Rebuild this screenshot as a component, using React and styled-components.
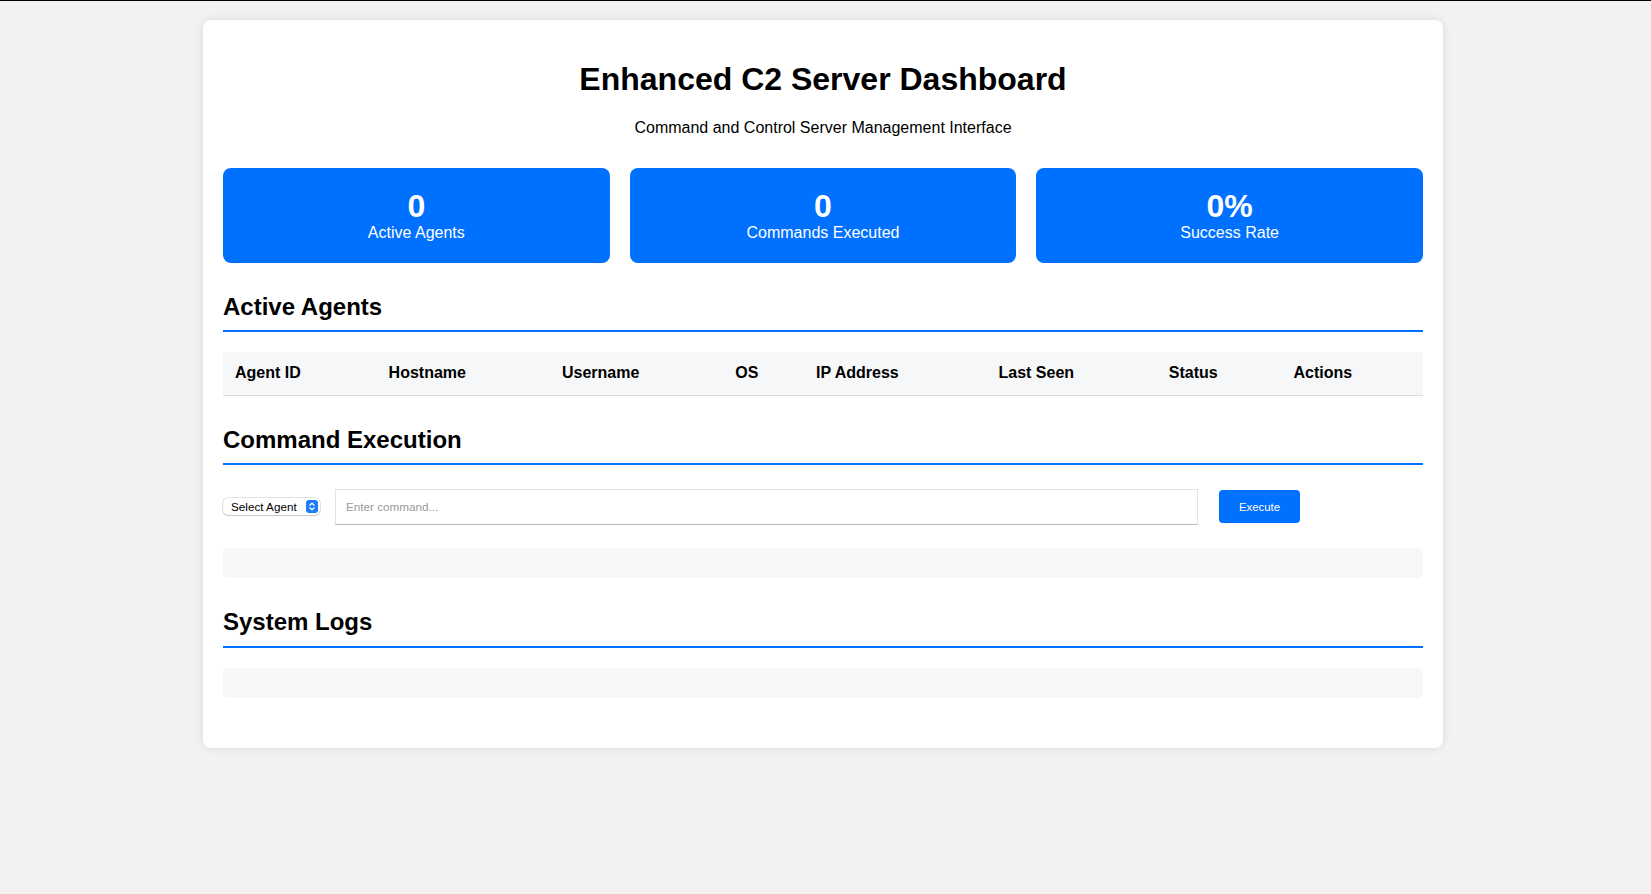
import React from "react";
import styled, { createGlobalStyle } from "styled-components";

const GlobalStyle = createGlobalStyle`
  html, body { margin: 0; padding: 0; }
  body {
    background: #f2f2f2;
    font-family: "Liberation Sans", Arial, Helvetica, sans-serif;
    line-height: 1.15;
    color: #000;
  }
  * { box-sizing: border-box; }
`;

const Page = styled.div`
  min-height: 894px;
  border-top: 1px solid #000;
  padding: 19px 5px 20px 0;
`;

const Container = styled.div`
  width: 1240px;
  margin: 0 auto;
  padding: 20px;
  background: #fff;
  border-radius: 8px;
  box-shadow: 0 0 10px rgba(0, 0, 0, 0.1);
`;

const Header = styled.header`
  text-align: center;
  margin-bottom: 30px;
`;

const Title = styled.h1`
  font-size: 32px;
  font-weight: 700;
  line-height: 1.15;
  margin: 21px 0 21.5px;
`;

const Subtitle = styled.p`
  font-size: 16px;
  margin: 0;
`;

const Stats = styled.div`
  display: grid;
  grid-template-columns: repeat(3, 1fr);
  gap: 20px;
  margin-bottom: 30px;
`;

const StatCard = styled.div`
  background: #0070ff;
  color: #fff;
  border-radius: 8px;
  padding: 20px;
  text-align: center;
`;

const StatNumber = styled.div`
  font-size: 32px;
  font-weight: 700;
`;

const StatLabel = styled.div`
  font-size: 16px;
`;

const Section = styled.section`
  margin-bottom: 30px;
`;

const SectionTitle = styled.h2`
  font-size: 24px;
  font-weight: 700;
  margin: 0 0 20px;
  padding-bottom: 10px;
  border-bottom: 2px solid #0070ff;
`;

const Table = styled.table`
  width: 100%;
  border-collapse: collapse;
`;

const Th = styled.th`
  text-align: left;
  padding: 12px;
  font-size: 16px;
  font-weight: 700;
  background: #f6f7f9;
  border-bottom: 1px solid #dcdcdc;
`;

const CommandRow = styled.div`
  display: flex;
  align-items: center;
  height: 43px;
  margin-bottom: 20px;
`;

const SelectWrap = styled.span`
  position: relative;
  display: inline-flex;
  width: 97px;
  height: 17px;
  margin-right: 15px;
  background: #fff;
  border-radius: 5px;
  box-shadow: 0 0 0 0.5px rgba(0, 0, 0, 0.22), 0 1px 1.5px rgba(0, 0, 0, 0.12);
`;

const AgentSelect = styled.select`
  appearance: none;
  -webkit-appearance: none;
  width: 100%;
  height: 100%;
  border: none;
  background: transparent;
  padding: 0 18px 0 8px;
  font-family: "Liberation Sans", Arial, sans-serif;
  font-size: 11.7px;
  color: #000;
  outline: none;
`;

const Stepper = styled.svg`
  position: absolute;
  right: 2px;
  top: 2px;
  pointer-events: none;
`;

const CommandInput = styled.input`
  width: 863px;
  height: 36px;
  padding: 0 10px;
  border: 1px solid #e3e3e3;
  border-bottom-color: #b9b9b9;
  font-family: "Liberation Sans", Arial, sans-serif;
  font-size: 11.7px;
  color: #000;
  outline: none;
  margin-right: 21px;
  &::placeholder { color: #9a9a9a; }
`;

const ExecuteButton = styled.button`
  width: 81px;
  height: 33px;
  background: #0070ff;
  color: #fff;
  border: none;
  border-radius: 4px;
  font-family: "Liberation Sans", Arial, sans-serif;
  font-size: 11.4px;
  cursor: pointer;
`;

const OutputBox = styled.div`
  background: #f6f7f9;
  border-radius: 5px;
  padding: 15px;
`;

const columns = ["Agent ID", "Hostname", "Username", "OS", "IP Address", "Last Seen", "Status", "Actions"];

const stats = [
  { value: "0", label: "Active Agents" },
  { value: "0", label: "Commands Executed" },
  { value: "0%", label: "Success Rate" },
];

export default function App() {
  return (
    <>
      <GlobalStyle />
      <Page>
        <Container>
          <Header>
            <Title>Enhanced C2 Server Dashboard</Title>
            <Subtitle>Command and Control Server Management Interface</Subtitle>
          </Header>

          <Stats>
            {stats.map((s) => (
              <StatCard key={s.label}>
                <StatNumber>{s.value}</StatNumber>
                <StatLabel>{s.label}</StatLabel>
              </StatCard>
            ))}
          </Stats>

          <Section>
            <SectionTitle>Active Agents</SectionTitle>
            <Table>
              <thead>
                <tr>
                  {columns.map((c) => (
                    <Th key={c}>{c}</Th>
                  ))}
                </tr>
              </thead>
              <tbody />
            </Table>
          </Section>

          <Section>
            <SectionTitle>Command Execution</SectionTitle>
            <CommandRow>
              <SelectWrap>
                <AgentSelect defaultValue="">
                  <option value="">Select Agent</option>
                </AgentSelect>
                <Stepper width="12" height="13" viewBox="0 0 12 13">
                  <rect x="0" y="0" width="12" height="13" rx="3" fill="#1f7cf4" />
                  <path d="M3.8 5.2 L6 3.2 L8.2 5.2" stroke="#fff" strokeWidth="1.2" fill="none" strokeLinecap="round" strokeLinejoin="round" />
                  <path d="M3.8 7.8 L6 9.8 L8.2 7.8" stroke="#fff" strokeWidth="1.2" fill="none" strokeLinecap="round" strokeLinejoin="round" />
                </Stepper>
              </SelectWrap>
              <CommandInput placeholder="Enter command..." />
              <ExecuteButton>Execute</ExecuteButton>
            </CommandRow>
            <OutputBox />
          </Section>

          <Section>
            <SectionTitle>System Logs</SectionTitle>
            <OutputBox />
          </Section>
        </Container>
      </Page>
    </>
  );
}
